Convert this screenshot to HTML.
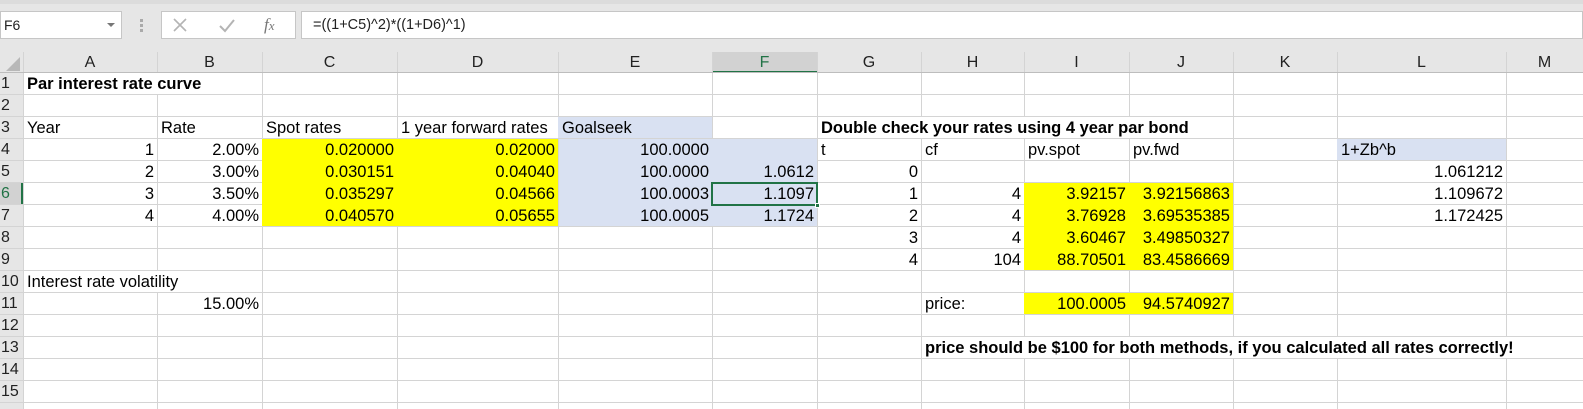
<!DOCTYPE html>
<html><head><meta charset="utf-8"><style>
*{margin:0;padding:0;box-sizing:border-box}
body{width:1583px;height:409px;overflow:hidden;background:#e6e6e6;font-family:"Liberation Sans",Arial,sans-serif;font-size:16.5px;color:#000;position:relative}
.a{position:absolute}
.t{position:absolute;height:21px;line-height:22px;white-space:nowrap;padding:0 3px}
.r{text-align:right}
.b{font-weight:bold}
.w{background:#fff}
.vl{position:absolute;top:52px;width:1px;height:357px;background:#d4d4d4}
.hl{position:absolute;left:0;width:1583px;height:1px;background:#d4d4d4}
.ch{position:absolute;top:52px;height:21px;line-height:21px;text-align:center;font-size:16px;color:#222}
.rh{position:absolute;left:0;width:23px;height:22px;line-height:22px;padding-left:1px;font-size:16px;color:#222}
.y{position:absolute;background:#ffff00}
.bl{position:absolute;background:#d9e1f2}
</style></head><body>
<div class="a" style="left:0;top:0;width:1583px;height:4px;background:#dcdcdc"></div>
<div class="a" style="left:0;top:11px;width:122px;height:28px;background:#fff;border:1px solid #c6c6c6"></div>
<div class="a" style="left:4px;top:11px;height:28px;line-height:28px;font-size:14px;color:#222">F6</div>
<div class="a" style="left:107px;top:23px;width:0;height:0;border-left:4px solid transparent;border-right:4px solid transparent;border-top:4px solid #777"></div>
<div class="a" style="left:140px;top:19px;width:3px;height:3px;background:#aaa"></div>
<div class="a" style="left:140px;top:24px;width:3px;height:3px;background:#aaa"></div>
<div class="a" style="left:140px;top:29px;width:3px;height:3px;background:#aaa"></div>
<div class="a" style="left:161px;top:11px;width:135px;height:28px;background:#fff;border:1px solid #c6c6c6"></div>
<svg class="a" style="left:172px;top:17px" width="16" height="16"><path d="M2 2L14 14M14 2L2 14" stroke="#b4b4b4" stroke-width="1.6"/></svg>
<svg class="a" style="left:218px;top:17px" width="18" height="16"><path d="M2 9L7 14L16 3" stroke="#b4b4b4" stroke-width="2" fill="none"/></svg>
<div class="a" style="left:264px;top:12px;font-family:'Liberation Serif',serif;font-style:italic;font-size:17px;color:#777;line-height:26px">f<span style="font-size:13px">x</span></div>
<div class="a" style="left:301px;top:11px;width:1282px;height:28px;background:#fff;border:1px solid #c6c6c6"></div>
<div class="a" style="left:313px;top:11px;height:28px;line-height:28px;font-size:14.5px;color:#222">=((1+C5)^2)*((1+D6)^1)</div>
<div class="a" style="left:23px;top:73px;width:1560px;height:336px;background:#fff"></div>
<div class="a" style="left:0;top:52px;width:23px;height:21px;background:#e6e6e6"></div>
<svg class="a" style="left:5px;top:56px" width="16" height="16"><path d="M15 1L15 15L1 15Z" fill="#b8b8b8"/></svg>
<div class="a" style="left:712px;top:52px;width:105px;height:21px;background:#d2d2d2"></div>
<div class="a" style="left:712px;top:71px;width:105px;height:2px;background:#217346"></div>
<div class="a" style="left:0;top:183px;width:23px;height:22px;background:#d2d2d2"></div>
<div class="a" style="left:21px;top:183px;width:2px;height:22px;background:#217346"></div>
<div class="vl" style="left:23px"></div><div class="vl" style="left:157px"></div><div class="vl" style="left:262px"></div><div class="vl" style="left:397px"></div><div class="vl" style="left:558px"></div><div class="vl" style="left:712px"></div><div class="vl" style="left:817px"></div><div class="vl" style="left:921px"></div><div class="vl" style="left:1024px"></div><div class="vl" style="left:1129px"></div><div class="vl" style="left:1233px"></div><div class="vl" style="left:1337px"></div><div class="vl" style="left:1506px"></div>
<div class="hl" style="top:72px;background:#bdbdbd"></div>
<div class="hl" style="top:94px"></div><div class="hl" style="top:116px"></div><div class="hl" style="top:138px"></div><div class="hl" style="top:160px"></div><div class="hl" style="top:182px"></div><div class="hl" style="top:204px"></div><div class="hl" style="top:226px"></div><div class="hl" style="top:248px"></div><div class="hl" style="top:270px"></div><div class="hl" style="top:292px"></div><div class="hl" style="top:314px"></div><div class="hl" style="top:336px"></div><div class="hl" style="top:358px"></div><div class="hl" style="top:380px"></div><div class="hl" style="top:402px"></div>
<div class="y" style="left:262px;top:139px;width:296px;height:87px"></div>
<div class="y" style="left:1024px;top:183px;width:209px;height:87px"></div>
<div class="y" style="left:1024px;top:293px;width:209px;height:21px"></div>
<div class="bl" style="left:558px;top:117px;width:154px;height:21px"></div>
<div class="bl" style="left:559px;top:139px;width:153px;height:87px"></div>
<div class="bl" style="left:712px;top:139px;width:105px;height:87px"></div>
<div class="bl" style="left:1337px;top:139px;width:169px;height:21px"></div>
<div class="ch" style="left:23px;width:134px">A</div><div class="ch" style="left:157px;width:105px">B</div><div class="ch" style="left:262px;width:135px">C</div><div class="ch" style="left:397px;width:161px">D</div><div class="ch" style="left:558px;width:154px">E</div><div class="ch" style="left:712px;width:105px;color:#217346">F</div><div class="ch" style="left:817px;width:104px">G</div><div class="ch" style="left:921px;width:103px">H</div><div class="ch" style="left:1024px;width:105px">I</div><div class="ch" style="left:1129px;width:104px">J</div><div class="ch" style="left:1233px;width:104px">K</div><div class="ch" style="left:1337px;width:169px">L</div><div class="ch" style="left:1506px;width:77px">M</div>
<div class="rh" style="top:73px">1</div><div class="rh" style="top:95px">2</div><div class="rh" style="top:117px">3</div><div class="rh" style="top:139px">4</div><div class="rh" style="top:161px">5</div><div class="rh" style="top:183px;color:#217346">6</div><div class="rh" style="top:205px">7</div><div class="rh" style="top:227px">8</div><div class="rh" style="top:249px">9</div><div class="rh" style="top:271px">10</div><div class="rh" style="top:293px">11</div><div class="rh" style="top:315px">12</div><div class="rh" style="top:337px">13</div><div class="rh" style="top:359px">14</div><div class="rh" style="top:381px">15</div>
<div class="t b w" style="left:24px;top:73px">Par interest rate curve</div>
<div class="t" style="left:24px;top:117px">Year</div>
<div class="t" style="left:158px;top:117px">Rate</div>
<div class="t" style="left:263px;top:117px">Spot rates</div>
<div class="t" style="left:398px;top:117px">1 year forward rates</div>
<div class="t" style="left:559px;top:117px">Goalseek</div>
<div class="t b w" style="left:818px;top:117px">Double check your rates using 4 year par bond</div>
<div class="t r" style="left:23px;width:134px;top:139px">1</div><div class="t r" style="left:23px;width:134px;top:161px">2</div><div class="t r" style="left:23px;width:134px;top:183px">3</div><div class="t r" style="left:23px;width:134px;top:205px">4</div>
<div class="t r" style="left:157px;width:105px;top:139px">2.00%</div><div class="t r" style="left:157px;width:105px;top:161px">3.00%</div><div class="t r" style="left:157px;width:105px;top:183px">3.50%</div><div class="t r" style="left:157px;width:105px;top:205px">4.00%</div>
<div class="t r" style="left:262px;width:135px;top:139px">0.020000</div><div class="t r" style="left:262px;width:135px;top:161px">0.030151</div><div class="t r" style="left:262px;width:135px;top:183px">0.035297</div><div class="t r" style="left:262px;width:135px;top:205px">0.040570</div>
<div class="t r" style="left:397px;width:161px;top:139px">0.02000</div><div class="t r" style="left:397px;width:161px;top:161px">0.04040</div><div class="t r" style="left:397px;width:161px;top:183px">0.04566</div><div class="t r" style="left:397px;width:161px;top:205px">0.05655</div>
<div class="t r" style="left:558px;width:154px;top:139px">100.0000</div><div class="t r" style="left:558px;width:154px;top:161px">100.0000</div><div class="t r" style="left:558px;width:154px;top:183px">100.0003</div><div class="t r" style="left:558px;width:154px;top:205px">100.0005</div>
<div class="t r" style="left:712px;width:105px;top:161px">1.0612</div><div class="t r" style="left:712px;width:105px;top:183px">1.1097</div><div class="t r" style="left:712px;width:105px;top:205px">1.1724</div>
<div class="a" style="left:711px;top:182px;width:107px;height:24px;border:2px solid #217346"></div>
<div class="a" style="left:815px;top:203px;width:5px;height:5px;background:#217346;border:1px solid #fff"></div>
<div class="t" style="left:818px;top:139px">t</div>
<div class="t" style="left:922px;top:139px">cf</div>
<div class="t" style="left:1025px;top:139px">pv.spot</div>
<div class="t" style="left:1130px;top:139px">pv.fwd</div>
<div class="t" style="left:1338px;top:139px">1+Zb^b</div>
<div class="t r" style="left:817px;width:104px;top:161px">0</div><div class="t r" style="left:817px;width:104px;top:183px">1</div><div class="t r" style="left:817px;width:104px;top:205px">2</div><div class="t r" style="left:817px;width:104px;top:227px">3</div><div class="t r" style="left:817px;width:104px;top:249px">4</div>
<div class="t r" style="left:921px;width:103px;top:183px">4</div><div class="t r" style="left:921px;width:103px;top:205px">4</div><div class="t r" style="left:921px;width:103px;top:227px">4</div><div class="t r" style="left:921px;width:103px;top:249px">104</div>
<div class="t r" style="left:1024px;width:105px;top:183px">3.92157</div><div class="t r" style="left:1024px;width:105px;top:205px">3.76928</div><div class="t r" style="left:1024px;width:105px;top:227px">3.60467</div><div class="t r" style="left:1024px;width:105px;top:249px">88.70501</div>
<div class="t r" style="left:1129px;width:104px;top:183px">3.92156863</div><div class="t r" style="left:1129px;width:104px;top:205px">3.69535385</div><div class="t r" style="left:1129px;width:104px;top:227px">3.49850327</div><div class="t r" style="left:1129px;width:104px;top:249px">83.4586669</div>
<div class="t r" style="left:1337px;width:169px;top:161px">1.061212</div><div class="t r" style="left:1337px;width:169px;top:183px">1.109672</div><div class="t r" style="left:1337px;width:169px;top:205px">1.172425</div>
<div class="t w" style="left:24px;top:271px">Interest rate volatility</div>
<div class="t r" style="left:157px;width:105px;top:293px">15.00%</div>
<div class="t" style="left:922px;top:293px">price:</div>
<div class="t r" style="left:1024px;width:105px;top:293px">100.0005</div>
<div class="t r" style="left:1129px;width:104px;top:293px">94.5740927</div>
<div class="t b w" style="left:922px;top:337px">price should be $100 for both methods, if you calculated all rates correctly!</div>
</body></html>
